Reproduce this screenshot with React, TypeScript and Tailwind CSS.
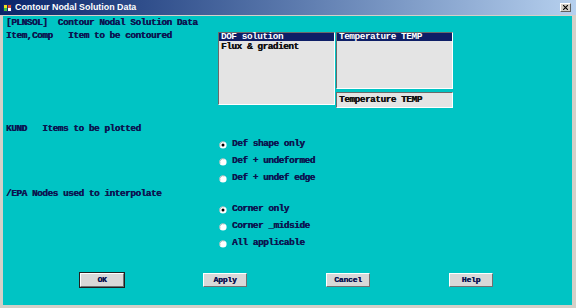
import React from "react";

const mono = { fontFamily: '"Liberation Mono", "DejaVu Sans Mono", monospace' };

const Label = ({ children }: { children: React.ReactNode }) => (
  <div className="h-[13px] leading-[13px] pl-[3px] whitespace-pre text-[9.4px] font-bold tracking-[-0.45px] text-[#0b1550] [text-shadow:0.35px_0_0_#0b1550]">
    {children}
  </div>
);

const Radio = ({ checked, label }: { checked?: boolean; label: string }) => (
  <div className="h-[17px] flex items-center pl-[216px] gap-[5px]">
    <svg width="8" height="8" viewBox="0 0 8 8">
      <circle cx="4" cy="4" r="3.6" fill="#ffffff" />
      <path d="M1 5.5 A3.4 3.4 0 0 1 5.5 1" stroke="#9aa" strokeWidth="0.9" fill="none" />
      {checked && <circle cx="4" cy="4" r="1.5" fill="#000" />}
    </svg>
    <span className="whitespace-pre text-[9.4px] font-bold tracking-[-0.45px] text-[#0b1550] [text-shadow:0.35px_0_0_#0b1550]">
      {label}
    </span>
  </div>
);

const Button = ({ label, primary }: { label: string; primary?: boolean }) => (
  <div
    className={
      "w-[46px] h-[16px] " + (primary ? "border border-[#202020]" : "border border-transparent")
    }
  >
    <div className="w-full h-full bg-[#d8d8d8] border-t border-l border-white border-b border-r border-b-[#707070] border-r-[#707070] flex items-center justify-center text-[8px] font-bold text-[#0b1550] tracking-[-0.2px] [text-shadow:0.3px_0_0_#0b1550]">
      {label}
    </div>
  </div>
);

export default function App() {
  return (
    <div
      className="w-[576px] h-[308px] bg-[#d4d0c8] flex flex-col pl-[3px] pr-[4px] pb-[3px] overflow-hidden"
      style={mono}
    >
      <div className="-ml-[3px] -mr-[4px] h-[15px] bg-gradient-to-r from-[#0a246a] to-[#b6d0ee] flex items-center pl-[3px] pr-[5px]">
        <svg width="9" height="8" viewBox="0 0 9 8" className="shrink-0">
          <rect x="0" y="0" width="9" height="8" fill="#1a2a70" />
          <rect x="1" y="1" width="3" height="3" fill="#f0e020" />
          <rect x="5" y="1" width="3" height="3" fill="#e05030" />
          <rect x="1" y="4" width="3" height="3" fill="#40c040" />
          <rect x="5" y="4" width="3" height="3" fill="#ffffff" />
        </svg>
        <span
          className="ml-[3px] text-[8.9px] font-bold text-white leading-none"
          style={{ fontFamily: '"Liberation Sans", Arial, sans-serif' }}
        >
          Contour Nodal Solution Data
        </span>
        <div className="ml-auto w-[11px] h-[9px] bg-[#d4d0c8] border-t border-l border-white border-b border-r border-b-[#606060] border-r-[#606060] flex items-center justify-center">
          <svg width="5" height="5" viewBox="0 0 5 5">
            <path d="M0 0 L5 5 M5 0 L0 5" stroke="#000" strokeWidth="1.1" />
          </svg>
        </div>
      </div>
      <div className="mt-[1px] flex-1 bg-[#00c4c4] flex flex-col">
        <Label>[PLNSOL]  Contour Nodal Solution Data</Label>
        <div className="flex">
          <div className="w-[215px]">
            <Label>Item,Comp   Item to be contoured</Label>
          </div>
          <div className="flex gap-[1px] mt-[3px]">
            <div className="w-[117px] h-[73px] bg-[#e4e4e4] border-t border-l border-[#6a6a6a] border-b border-r border-b-white border-r-white text-[9.4px] font-bold tracking-[-0.45px] leading-[9px]">
              <div className="bg-[#0e1e66] text-white pl-[2px] h-[8px] leading-[8px]">DOF solution</div>
              <div className="text-[#101010] pl-[2px] pt-[1px] [text-shadow:0.3px_0_0_#101010]">Flux &amp; gradient</div>
            </div>
            <div className="flex flex-col gap-[3px]">
              <div className="w-[117px] h-[57px] bg-[#e4e4e4] border-t border-l border-[#6a6a6a] border-b border-r border-b-white border-r-white text-[9.4px] font-bold tracking-[-0.45px]">
                <div className="bg-[#0e1e66] text-white pl-[2px] h-[8px] leading-[8px]">Temperature TEMP</div>
              </div>
              <div className="w-[117px] h-[16px] bg-[#e4e4e4] border-t border-l border-[#6a6a6a] border-b border-r border-b-white border-r-white text-[9.4px] font-bold tracking-[-0.45px] text-[#101010] [text-shadow:0.3px_0_0_#101010] pl-[2px] flex items-center">
                Temperature TEMP
              </div>
            </div>
          </div>
        </div>
        <div className="mt-[14px]">
          <Label>KUND   Items to be plotted</Label>
        </div>
        <div className="mt-[1px]">
          <Radio checked label="Def shape only" />
          <Radio label="Def + undeformed" />
          <Radio label="Def + undef edge" />
        </div>
        <Label>/EPA Nodes used to interpolate</Label>
        <div className="mt-[1px]">
          <Radio checked label="Corner only" />
          <Radio label="Corner _midside" />
          <Radio label="All applicable" />
        </div>
        <div className="mt-[20px] flex pl-[76px] gap-[77px]">
          <Button primary label="OK" />
          <Button label="Apply" />
          <Button label="Cancel" />
          <Button label="Help" />
        </div>
      </div>
    </div>
  );
}
